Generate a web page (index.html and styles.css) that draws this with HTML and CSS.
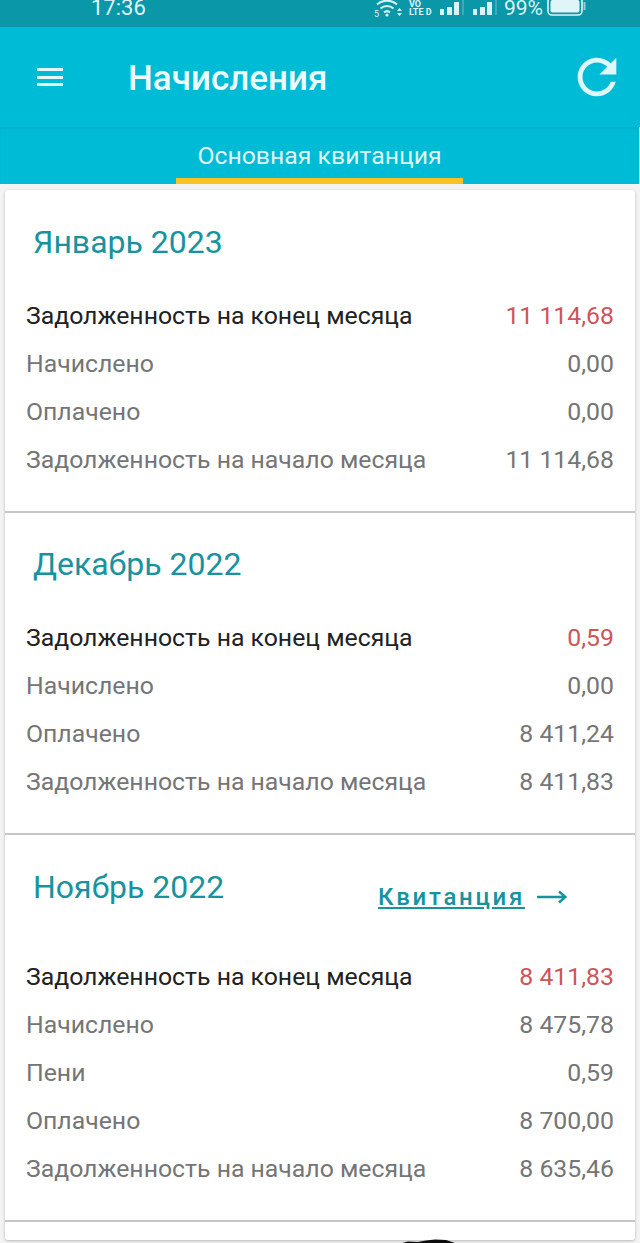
FILE: index.html
```html
<!DOCTYPE html>
<html lang="ru">
<head>
  <meta charset="UTF-8">
  <meta name="viewport" content="width=device-width, initial-scale=1.0">
  <title>Начисления</title>
  <link rel="stylesheet" href="styles.css">
</head>
<body>
  <div class="status-bar">
    <span class="status-time">17:36</span>
    <div class="status-icons">
      <svg class="icon-wifi" width="29" height="18" viewBox="0 0 29 18">
        <text x="0" y="17" class="wifi-five">5</text>
        <path d="M3 4.500a15 15 0 0 1 20 0M6.500 8.500a9.500 9.500 0 0 1 13 0M10 12.500a4.500 4.500 0 0 1 6 0" fill="none" stroke="#d9f3f6" stroke-width="2"/>
        <circle cx="13" cy="15" r="1.600" fill="#d9f3f6"/>
        <path d="M23 11l2.500-3 2.500 3zM23 13l2.500 3 2.500-3z" fill="#d9f3f6"/>
      </svg>
      <div class="volte"><span>VO</span><span>LTE D</span></div>
      <svg class="icon-signal" width="24" height="16" viewBox="0 0 24 16">
        <rect x="0" y="9" width="4" height="6" fill="#d9f3f6"/>
        <rect x="7" y="7" width="5" height="8" fill="#d9f3f6"/>
        <rect x="14" y="2" width="5" height="13" fill="#d9f3f6"/>
        <rect x="22" y="0" width="2" height="15" fill="#3fa9b8"/>
      </svg>
      <svg class="icon-signal" width="24" height="16" viewBox="0 0 24 16">
        <rect x="0" y="9" width="4" height="6" fill="#d9f3f6"/>
        <rect x="7" y="7" width="5" height="8" fill="#d9f3f6"/>
        <rect x="14" y="2" width="5" height="13" fill="#d9f3f6"/>
        <rect x="22" y="0" width="2" height="15" fill="#3fa9b8"/>
      </svg>
      <span class="status-battery-text">99%</span>
      <svg class="icon-battery" width="39" height="16" viewBox="0 0 39 16">
        <rect x="1" y="-3" width="34" height="18" rx="4" fill="none" stroke="#e0f5f7" stroke-width="1.600"/>
        <rect x="3.500" y="0" width="29" height="12.500" rx="2" fill="#e0f5f7"/>
        <rect x="36.500" y="2" width="2" height="8" fill="#8fd0d8"/>
      </svg>
    </div>
  </div>

  <header class="toolbar">
    <div class="menu-icon"><span></span><span></span><span></span></div>
    <h1 class="toolbar-title">Начисления</h1>
    <svg class="refresh-icon" width="58" height="58" viewBox="0 0 24 24">
      <path d="M17.65 6.35C16.2 4.9 14.21 4 12 4c-4.42 0-7.99 3.58-7.99 8s3.57 8 7.99 8c3.73 0 6.84-2.55 7.73-6h-2.08c-.82 2.33-3.04 4-5.65 4-3.31 0-6-2.69-6-6s2.69-6 6-6c1.66 0 3.14.69 4.22 1.78L13 11h7V4l-2.35 2.35z"/>
    </svg>
  </header>

  <nav class="tabs">
    <div class="tab">Основная квитанция</div>
  </nav>

  <main class="card">
    <section class="month month-first">
      <div class="month-head">
        <h2 class="month-title">Январь 2023</h2>
      </div>
      <div class="row row-main"><span>Задолженность на конец месяца</span><span class="debt">11 114,68</span></div>
      <div class="row"><span>Начислено</span><span>0,00</span></div>
      <div class="row"><span>Оплачено</span><span>0,00</span></div>
      <div class="row"><span>Задолженность на начало месяца</span><span>11 114,68</span></div>
    </section>

    <section class="month month-second">
      <div class="month-head">
        <h2 class="month-title">Декабрь 2022</h2>
      </div>
      <div class="row row-main"><span>Задолженность на конец месяца</span><span class="debt">0,59</span></div>
      <div class="row"><span>Начислено</span><span>0,00</span></div>
      <div class="row"><span>Оплачено</span><span>8 411,24</span></div>
      <div class="row"><span>Задолженность на начало месяца</span><span>8 411,83</span></div>
    </section>

    <section class="month month-receipt">
      <div class="month-head">
        <h2 class="month-title">Ноябрь 2022</h2>
        <a class="receipt-link" href="#"><span class="receipt-text">Квитанция</span>
          <svg width="30" height="14" viewBox="0 0 30 14">
            <path d="M0 7h28M22 1.500L28.500 7 22 12.500" fill="none" stroke="#17939f" stroke-width="2.400"/>
          </svg>
        </a>
      </div>
      <div class="row row-main"><span>Задолженность на конец месяца</span><span class="debt">8 411,83</span></div>
      <div class="row"><span>Начислено</span><span>8 475,78</span></div>
      <div class="row"><span>Пени</span><span>0,59</span></div>
      <div class="row"><span>Оплачено</span><span>8 700,00</span></div>
      <div class="row"><span>Задолженность на начало месяца</span><span>8 635,46</span></div>
    </section>
  </main>

  <div class="bottom-strip">
    <svg class="smudge" width="53" height="4" viewBox="0 0 53 4">
      <path d="M0 4L6 2.500 16 3 24 1.500 33 .5 44 1 53 4z" fill="#0c0c0c"/>
    </svg>
  </div>
</body>
</html>
```

FILE: styles.css
```css
html, body {
  margin: 0;
  height: 1243px;
  overflow: hidden;
}
body {
  font-family: Roboto, "Noto Sans", sans-serif;
  background-color: #f3f3f3;
}
h1, h2 {
  margin: 0;
  font-weight: 400;
}

.status-bar {
  height: 27px;
  background-color: #0a97a8;
  color: #dff4f6;
  display: flex;
  justify-content: space-between;
  align-items: flex-start;
  padding: 0 54px 0 91px;
  overflow: hidden;
}
.status-time {
  font-size: 22px;
  line-height: 16px;
}
.status-icons {
  display: flex;
  align-items: flex-start;
}
.icon-wifi {
  margin-right: 6px;
}
.wifi-five {
  font-size: 9px;
  fill: #d9f3f6;
}
.volte {
  display: flex;
  flex-direction: column;
  white-space: nowrap;
  font-size: 9px;
  line-height: 8px;
  font-weight: 700;
  width: 22px;
  margin-right: 9px;
}
.icon-signal {
  margin-right: 9px;
}
.status-battery-text {
  font-size: 21px;
  line-height: 16px;
  margin: 0 4px 0 -2px;
}

.toolbar {
  height: 100px;
  background-color: #00bbd5;
  display: flex;
  align-items: center;
  color: white;
  padding: 0 8px 0 37px;
}
.menu-icon {
  width: 26px;
  height: 18px;
  display: flex;
  flex-direction: column;
  justify-content: space-between;
  margin: 0 65px 0 0;
}
.menu-icon span {
  height: 3px;
  background-color: #e4f8fb;
}
.toolbar-title {
  flex: 1;
  font-size: 35px;
  font-weight: 500;
  color: #eefbfd;
  margin-top: 2px;
}
.refresh-icon {
  fill: #dff7fa;
  margin-right: 6px;
}

.tabs {
  height: 57px;
  background-color: #00bbd5;
  box-shadow: inset 0 2px 2px rgba(0, 0, 0, 0.05);
  display: flex;
  justify-content: center;
  margin-right: 1px;
}
.tab {
  width: 287px;
  height: 57px;
  box-sizing: border-box;
  border-bottom: 6px solid #f6c322;
  text-align: center;
  color: #dff6f9;
  font-size: 24.8px;
  line-height: 58px;
}

.card {
  margin: 6px 5px 0;
  height: 1050px;
  background-color: white;
  border-radius: 3px;
  box-shadow: 0 1px 3px rgba(0, 0, 0, 0.25);
}
.month {
  box-sizing: border-box;
  border-bottom: 2px solid #c6c6c6;
  padding: 0 21px;
}
.month-first {
  height: 323px;
}
.month-second {
  height: 322px;
}
.month-receipt {
  height: 387px;
}
.month-head {
  height: 101px;
  display: flex;
  justify-content: space-between;
  align-items: flex-start;
}
.month-second .month-head {
  height: 100px;
}
.month-receipt .month-head {
  height: 117px;
}
.month-title {
  color: #17939f;
  font-size: 32px;
  line-height: 40px;
  margin: 32px 0 0 7px;
}
.month-second .month-title {
  margin-top: 31px;
}
.receipt-link {
  display: flex;
  align-items: center;
  margin: 48px 47px 0 0;
  text-decoration: none;
  color: #17939f;
  font-size: 24px;
  font-weight: 500;
  letter-spacing: 2.7px;
}
.receipt-text {
  text-decoration: underline;
  margin-right: 12px;
}
.row {
  height: 48px;
  display: flex;
  justify-content: space-between;
  align-items: center;
  color: #757575;
  font-size: 24.8px;
}
.row-main {
  color: #212121;
}
.row-main .debt {
  color: #cd555a;
}

.bottom-strip {
  height: 3px;
  position: relative;
}
.smudge {
  position: absolute;
  left: 402px;
  top: -1px;
}
```
